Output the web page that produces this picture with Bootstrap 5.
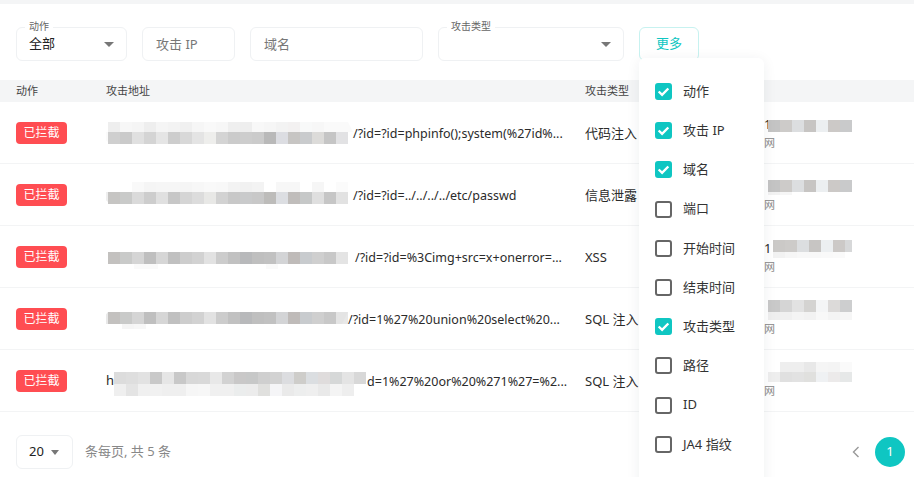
<!DOCTYPE html>
<html lang="zh">
<head>
<meta charset="utf-8">
<title>攻击日志</title>
<link rel="stylesheet" href="https://cdn.jsdelivr.net/npm/bootstrap@5.3.0/dist/css/bootstrap.min.css">
<style>
html,body{height:477px;overflow:hidden;background:#fff}
body{font-family:"Noto Sans","Noto Sans CJK SC",sans-serif;font-size:13px;color:#2b2b2b}
.top-strip{height:4px;background:#f4f5f6}
.filter-bar{padding:23px 16px 19px;gap:15px}
.field-wrap{position:relative}
.w-action{width:111px}.w-ip{width:93px}.w-domain{width:173px}.w-type{width:186px}.w-page{width:57px}
.field-wrap .form-control,.field-wrap .form-select{height:34px;font-size:13px;border:1px solid #eff1f3;border-radius:6px;box-shadow:none;color:#222;padding:0 12px}
.field-wrap .form-control{padding-left:13px}
.field-wrap .form-control::placeholder{color:#777}
.field-wrap .form-select{padding-right:24px;background-position:right 12px center;background-size:10px 5px;background-image:url("data:image/svg+xml,%3csvg xmlns='http://www.w3.org/2000/svg' viewBox='0 0 10 6' preserveAspectRatio='none'%3e%3cpath fill='%23777' d='M0 0h10L5 6z'/%3e%3c/svg%3e")}
.float-label{position:absolute;top:-7px;left:9px;padding:0 4px;background:#fff;font-size:10px;line-height:12px;color:#666}
.more-btn{width:60px;height:34px;padding:0;font-size:13px;color:#0fc6c2;background:#fff;border:1px solid #c7f2f0;border-radius:6px}
.column-menu{display:block;top:31px;left:0;width:125px;height:440px;min-width:0;margin:0;padding:14px 16px 0;border:0;border-radius:6px;box-shadow:0 2px 14px rgba(30,40,50,.07);z-index:5;font-size:13px}
.column-item{height:39.2px;gap:11px;color:#333}
.column-item .form-check-input{width:17px;height:17px;margin:0;flex:none;border:2px solid #666;border-radius:3px;box-shadow:none}
.column-item .form-check-input:checked{background-color:#0fc6c2;border-color:#0fc6c2;background-size:15px;background-image:url("data:image/svg+xml,%3csvg xmlns='http://www.w3.org/2000/svg' viewBox='0 0 14 14'%3e%3cpath fill='none' stroke='%23fff' stroke-width='2.2' d='M2.5 7l3.2 3.2 5.8-6'/%3e%3c/svg%3e")}
.log-table{table-layout:fixed;width:914px;margin:0;border-collapse:separate;border-spacing:0}
.log-table th{height:22px;padding:0;background:#f4f5f6;font-size:11px;font-weight:400;color:#444;border:0;line-height:22px}
.log-table td{height:62px;padding:0;vertical-align:middle;border-bottom:1px solid #f3f4f5;color:#2b2b2b;white-space:nowrap;overflow:hidden}
.log-table td.type-cell{padding-top:2px}
.c-act{width:106px;padding-left:16px!important}.c-addr{width:479px}.c-type{width:149px}.c-src{width:180px;padding-left:30px!important}
.blocked-tag{display:inline-block;width:51px;height:22px;padding:0;font-size:12px;font-weight:400;line-height:22px;text-align:center;background:#ff4d52;color:#fff;border-radius:4px;vertical-align:middle}
.addr-cell{height:30px}
.url-text{font-size:12.5px;padding-top:4px}
.mosaic{display:block;flex:none}
.shift-left{margin-left:-10px}
.src-line{height:20px;line-height:20px}
.src-mosaic{margin-left:4px}
.src-after{margin-left:-3px}
.src-sub{height:18px;line-height:18px;font-size:11px;color:#888}
.pager-bar{padding:23px 9px 0 16px}
.pager-text{color:#888;margin-left:12px}
.w-page .form-select{background-position:right 13px center;background-size:8px 5px}
.pager-list{gap:5px;margin:0}
.pager-list .page-link{width:30px;height:30px;padding:0;display:flex;align-items:center;justify-content:center;border:0;border-radius:50%!important;background:#fff;color:#888;font-size:13px;box-shadow:none}
.pager-list .active .page-link{background:#0fc6c2;color:#fff}
</style>
</head>
<body>
<div class="top-strip"></div>
<form class="filter-bar d-flex align-items-start">
  <div class="field-wrap w-action">
    <span class="float-label">动作</span>
    <select class="form-select" aria-label="动作"><option>全部</option></select>
  </div>
  <div class="field-wrap w-ip"><input class="form-control" placeholder="攻击 IP"></div>
  <div class="field-wrap w-domain"><input class="form-control" placeholder="域名"></div>
  <div class="field-wrap w-type">
    <span class="float-label">攻击类型</span>
    <select class="form-select" aria-label="攻击类型"><option></option></select>
  </div>
  <div class="position-relative">
    <button type="button" class="btn more-btn">更多</button>
    <div class="dropdown-menu column-menu">
      <label class="column-item d-flex align-items-center"><input class="form-check-input" type="checkbox" checked>动作</label>
      <label class="column-item d-flex align-items-center"><input class="form-check-input" type="checkbox" checked>攻击 IP</label>
      <label class="column-item d-flex align-items-center"><input class="form-check-input" type="checkbox" checked>域名</label>
      <label class="column-item d-flex align-items-center"><input class="form-check-input" type="checkbox">端口</label>
      <label class="column-item d-flex align-items-center"><input class="form-check-input" type="checkbox">开始时间</label>
      <label class="column-item d-flex align-items-center"><input class="form-check-input" type="checkbox">结束时间</label>
      <label class="column-item d-flex align-items-center"><input class="form-check-input" type="checkbox" checked>攻击类型</label>
      <label class="column-item d-flex align-items-center"><input class="form-check-input" type="checkbox">路径</label>
      <label class="column-item d-flex align-items-center"><input class="form-check-input" type="checkbox">ID</label>
      <label class="column-item d-flex align-items-center"><input class="form-check-input" type="checkbox">JA4 指纹</label>
    </div>
  </div>
</form>

<table class="table log-table">
  <thead>
    <tr><th class="c-act">动作</th><th class="c-addr">攻击地址</th><th class="c-type">攻击类型</th><th class="c-src"></th></tr>
  </thead>
  <tbody>
    <tr>
      <td class="c-act"><span class="badge blocked-tag">已拦截</span></td>
      <td><div class="addr-cell d-flex align-items-center"><svg class="mosaic shift-left" width="257" height="30" data-b="4,10,12:eee,f7f7f7,f5f5f5,eee,f5f5f5,f3f3f3,f0f0f0,f6f6f6,f9f9f9,f7f7f7,efefef,eee,f8f8f8,f6f6f6,f3f3f3,f3f1f1,f8f9f9,f7f7f7,fafafa,fafafa|14,12,12:cfcfcf,cacaca,e0e0e0,d4d4d4,e5e5e5,cdcdcd,d8d8d8,e4e4e4,eeeeec,d4d4d4,cbcbcb,cdcdcd,cbcbcb,b9b9b9,dcdde2,c7c5c3,c9cbcd,dcdbd9,c5c5c5,e2e2e4" data-p="1,14 12,14 12,24|252,4 257,14 252,14:fafafa"></svg><span class="url-text">/?id=?id=phpinfo();system(%27id%...</span></div></td>
      <td class="type-cell">代码注入</td>
      <td class="c-src"><div class="d-flex src-line"><span>1</span><svg class="mosaic src-after" width="84" height="20" data-b="6,12,0:c4c4c4,cdcbc9,dcdee0,c7c5c3,eceff1,ccc9c7,c9cacb"></svg></div><div class="src-sub">网</div></td>
    </tr>
    <tr>
      <td class="c-act"><span class="badge blocked-tag">已拦截</span></td>
      <td><div class="addr-cell d-flex align-items-center"><svg class="mosaic shift-left" width="257" height="30" data-b="2,10,12:fff,fff,f9f9f9,f5f5f5,f6f6f6,f6f6f6,f5f5f5,f7f7f7,f9f9f9,f8f8f8,f3f3f3,f1f1f1,f3f3f3,fff,f7f7f7,f7f7f7,fff,f6f6f6,fff,fbfbfb|12,12,12:c6c5c3,c9cac9,dadada,cdcdcd,e0e0e0,c7c7c7,d5d5d5,dcdcdc,e8e8e6,d2d2d2,c8c8c8,c9cacb,c8c8c8,bdbcba,dcdee2,c0bdbb,c6c8c8,dfdfdf,c6c6c6,e2e2e2" data-p="1,12 12,12 12,22:eee"></svg><span class="url-text">/?id=?id=../../../../etc/passwd</span></div></td>
      <td class="type-cell">信息泄露</td>
      <td class="c-src"><div class="d-flex src-line"><svg class="mosaic src-mosaic" width="84" height="20" data-b="4,12,0:c4c4c4,cdcbc9,dcdee0,c7c5c3,eceff1,ccc9c7,c9cacb|16,3,0:f2f2f2,f6f6f6"></svg></div><div class="src-sub">网</div></td>
    </tr>
    <tr>
      <td class="c-act"><span class="badge blocked-tag">已拦截</span></td>
      <td><div class="addr-cell d-flex align-items-center"><svg class="mosaic shift-left" width="259" height="30" data-b="10,12,12:c3c1bf,c9cac9,d5d5d5,bfbfbf,d6d6d6,c0c0c0,cdcdcd,d2d2d2,e2e2e2,cccccc,c1c1c1,b8b9bb,bfbfbf,c1c1c1,d3d4d6,bfbbb9,c8cbce,cfcfcf,c8c8c8,e4e4e4|22,5,14:fff,fff,fafafa,fafafa,fff,fff,fff,fff,fff,fff,fff,fff,fff,fafafa"></svg><span class="url-text">/?id=?id=%3Cimg+src=x+onerror=...</span></div></td>
      <td class="type-cell">XSS</td>
      <td class="c-src"><div class="d-flex src-line"><span>1</span><svg class="mosaic src-after" width="84" height="20" data-b="2,12,5:cbc9c7,cdcbc9,dcdee0,c7c5c3,eceff1,ccc9c7,d7d8d9|14,6,5:f2f2f2,f6f6f6,f8f8f8,f8f8f8,f9f9f9,fafafa"></svg></div><div class="src-sub">网</div></td>
    </tr>
    <tr>
      <td class="c-act"><span class="badge blocked-tag">已拦截</span></td>
      <td><div class="addr-cell d-flex align-items-center"><svg class="mosaic shift-left" width="252" height="30" data-b="8,12,12:c3c1bf,c9cac9,d5d5d5,bfbfbf,d6d6d6,c0c0c0,cdcdcd,d2d2d2,e2e2e2,cccccc,c1c1c1,b8b9bb,bfbfbf,c1c1c1,d3d4d6,bfbbb9,c8cbce,cfcfcf,c8c8c8,e4e4e4|20,5,26:f5f5f5,f7f7f7" data-p="1,20 12,8 12,20|252,8 252,20 246,20:e8e8e8"></svg><span class="url-text">/?id=1%27%20union%20select%20...</span></div></td>
      <td class="type-cell">SQL 注入</td>
      <td class="c-src"><div class="d-flex src-line"><svg class="mosaic src-mosaic" width="84" height="20" data-b="0,12,0:c9c9c9,d5d5d5,e2e2e2,d4d3d1,f4f5f6,dcdad9,cdcecf|12,9,0:efefef,f0f0f0,f4f4f4,f2f2f2,f8f8f8,f4f4f4,f6f6f6"></svg></div><div class="src-sub">网</div></td>
    </tr>
    <tr>
      <td class="c-act"><span class="badge blocked-tag">已拦截</span></td>
      <td><div class="addr-cell d-flex align-items-center"><span>h</span><svg class="mosaic" width="253" height="30" data-b="6,12,0:dcdcdc,dedede,e2e2e2,c9c9c9,e6e6e6,c8c8c8,d8d8d8,d9d9d9,e8e8e8,d2d2d2,c9c8c8,c7c8c8,cfcfcf,d2d2d2,dcdde0,cecdca,dbdee1,dfdcdc,d6d8d8,e4e4e4,d8d8d8|18,12,0:efefef,e4e4e4,f0f0f0,f1f1f1,efefef,efefef,f6f6f6,f7f7f7,f0f0f0,f0f0f0,ebeded,ececec,e0e0de,f5f5f7,eaeaea,edeeee,efefef,e9e9e9,f4f4f4,eeeeee"></svg><span class="url-text">d=1%27%20or%20%271%27=%2...</span></div></td>
      <td class="type-cell">SQL 注入</td>
      <td class="c-src"><div class="d-flex src-line"><svg class="mosaic src-mosaic" width="84" height="20" data-b="0,10,0:fff,eee,eee,e8e8e8,f5f5f5,f4f4f4,fafafa|10,10,0:eee,e0e0e0,e2e2e2,e0e0de,eff1f3,eceaea,e6e8e8"></svg></div><div class="src-sub">网</div></td>
    </tr>
  </tbody>
</table>

<div class="pager-bar d-flex justify-content-between align-items-center">
  <div class="d-flex align-items-center">
    <div class="field-wrap w-page">
      <select class="form-select" aria-label="每页条数"><option>20</option></select>
    </div>
    <span class="pager-text">条每页, 共 5 条</span>
  </div>
  <ul class="pagination pager-list">
    <li class="page-item disabled"><a class="page-link" href="#" aria-label="上一页"><svg width="8" height="12" viewBox="0 0 8 12"><path d="M6.5 1 1.5 6l5 5" fill="none" stroke="#999" stroke-width="1.4"/></svg></a></li>
    <li class="page-item active"><a class="page-link" href="#">1</a></li>
  </ul>
</div>

<script src="https://cdn.jsdelivr.net/npm/bootstrap@5.3.0/dist/js/bootstrap.bundle.min.js"></script>
<script>
document.querySelectorAll('svg.mosaic').forEach(function(svg){
  var ns='http://www.w3.org/2000/svg',step=12;
  svg.dataset.b.split('|').forEach(function(band){
    var p=band.split(':'),m=p[0].split(',').map(Number);
    p[1].split(',').forEach(function(c,i){
      var r=document.createElementNS(ns,'rect');
      r.setAttribute('x',m[2]+i*step);r.setAttribute('y',m[0]);
      r.setAttribute('width',step);r.setAttribute('height',m[1]);
      r.setAttribute('fill','#'+c);svg.appendChild(r);
    });
  });
  if(svg.dataset.p){
    var parts=svg.dataset.p.split(':'),fill='#'+(parts[1]||'eee');
    parts[0].split('|').forEach(function(pts){
      var g=document.createElementNS(ns,'polygon');
      g.setAttribute('points',pts);g.setAttribute('fill',fill);svg.appendChild(g);
    });
  }
});
</script>
</body>
</html>
